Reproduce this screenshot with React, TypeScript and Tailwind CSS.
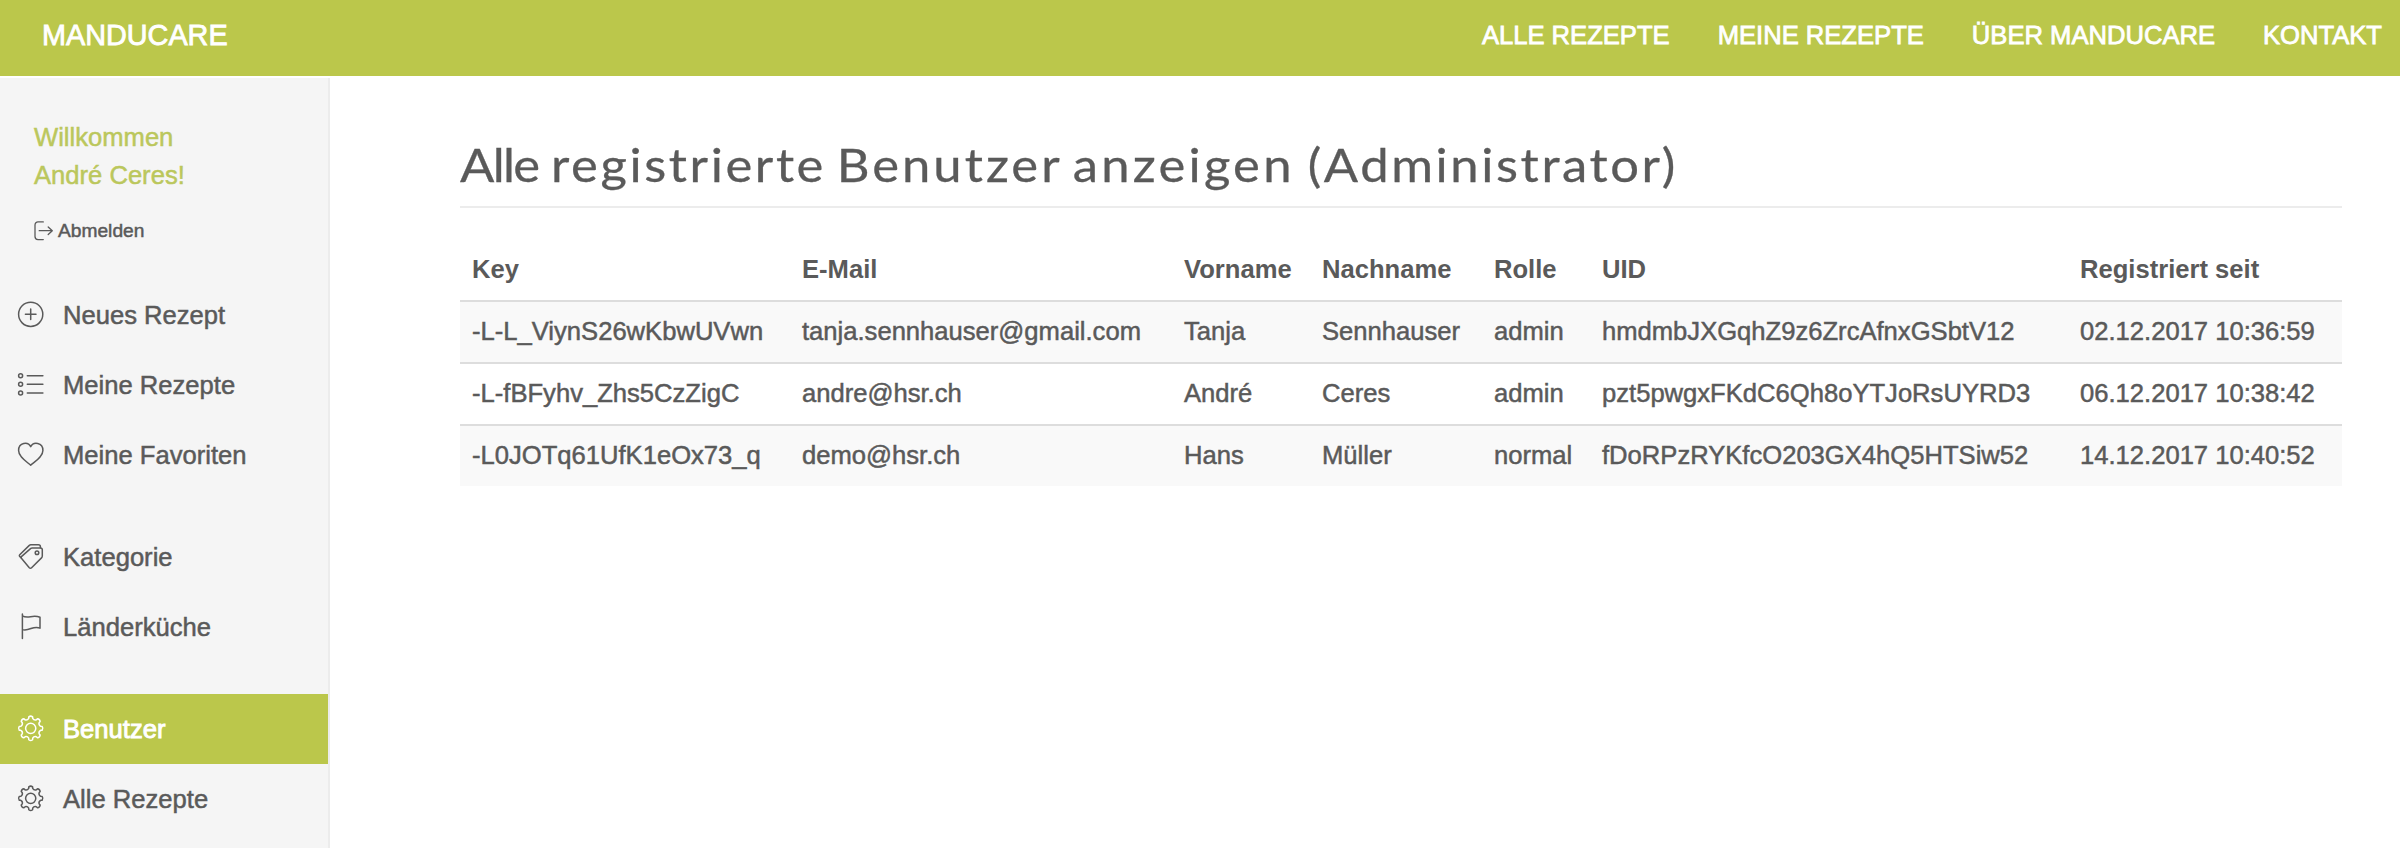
import type { ReactNode } from "react";

const navLinks = ["ALLE REZEPTE", "MEINE REZEPTE", "ÜBER MANDUCARE", "KONTAKT"];

const headers = ["Key", "E-Mail", "Vorname", "Nachname", "Rolle", "UID", "Registriert seit"];

const users = [
  ["-L-L_ViynS26wKbwUVwn", "tanja.sennhauser@gmail.com", "Tanja", "Sennhauser", "admin", "hmdmbJXGqhZ9z6ZrcAfnxGSbtV12", "02.12.2017 10:36:59"],
  ["-L-fBFyhv_Zhs5CzZigC", "andre@hsr.ch", "André", "Ceres", "admin", "pzt5pwgxFKdC6Qh8oYTJoRsUYRD3", "06.12.2017 10:38:42"],
  ["-L0JOTq61UfK1eOx73_q", "demo@hsr.ch", "Hans", "Müller", "normal", "fDoRPzRYKfcO203GX4hQ5HTSiw52", "14.12.2017 10:40:52"],
];

function Icon({ children }: { children: ReactNode }) {
  return (
    <svg
      className="h-[26px] w-[26px] shrink-0 overflow-visible"
      viewBox="0 0 26 26"
      fill="none"
      stroke="currentColor"
      strokeWidth="1.5"
      strokeLinecap="round"
      strokeLinejoin="round"
    >
      {children}
    </svg>
  );
}

function PlusIcon() {
  return (
    <Icon>
      <circle cx="12.7" cy="12.3" r="12.1" />
      <path d="M12.7 7v10.6M7.4 12.3H18" />
    </Icon>
  );
}

function ListIcon() {
  return (
    <Icon>
      <circle cx="2.6" cy="3.7" r="2" />
      <circle cx="2.6" cy="12.3" r="2" />
      <circle cx="2.6" cy="20.9" r="2" />
      <path d="M9.3 3.7h15.6M9.3 12.3h15.6M9.3 20.9h15.6" />
    </Icon>
  );
}

function HeartIcon() {
  return (
    <Icon>
      <path d="M12.7 4.6C10.2 -.6 .6 .1 .6 8.4C.6 14.8 8 19.2 12.7 23.2C17.4 19.2 24.9 14.8 24.9 8.4C24.9 .1 15.2 -.6 12.7 4.6Z" />
    </Icon>
  );
}

function TagIcon() {
  return (
    <Icon>
      <path d="M3.4 14.2a1.2 1.2 0 0 1 0-1.6L12.8 4.4a2 2 0 0 1 1.3-.5H22.5a1.8 1.8 0 0 1 1.8 1.8V12a2.6 2.6 0 0 1-.8 1.9L13.6 23.8a1.6 1.6 0 0 1-2.3 0Z" />
      <path d="M3.3 14L1.7 12.4a1.2 1.2 0 0 1 0-1.7L11.3 1.4a2 2 0 0 1 1.4-.6H20.4a2 2 0 0 1 2 2v1" />
      <circle cx="19" cy="8.7" r="1.8" />
    </Icon>
  );
}

function FlagIcon() {
  return (
    <Icon>
      <path d="M4.4 0V24.6M4.4 1.8C10 5.2 14.5 .2 22 3.2V14.2C15.5 10.8 11.5 17.6 4.4 15.6" />
    </Icon>
  );
}

function gearPoint(radius: number, degrees: number) {
  const angle = (degrees * Math.PI) / 180;
  return `${(12.7 + radius * Math.cos(angle)).toFixed(2)} ${(12.3 + radius * Math.sin(angle)).toFixed(2)}`;
}

const gearPath =
  [0, 45, 90, 135, 180, 225, 270, 315]
    .map(
      (a, i) =>
        `${i === 0 ? "M" : "L"}${gearPoint(11.6, a - 9.5)}Q${gearPoint(12.9, a)} ${gearPoint(11.6, a + 9.5)}L${gearPoint(10.1, a + 11.5)}Q${gearPoint(8.4, a + 22.5)} ${gearPoint(10.1, a + 33.5)}`,
    )
    .join("") + "Z";

function GearIcon() {
  return (
    <Icon>
      <path d={gearPath} />
      <circle cx="12.7" cy="12.3" r="5.1" />
    </Icon>
  );
}

function LogoutIcon() {
  return (
    <svg
      className="h-5 w-5 shrink-0"
      viewBox="0 0 20 20"
      fill="none"
      stroke="currentColor"
      strokeWidth="1.3"
      strokeLinecap="round"
      strokeLinejoin="round"
    >
      <path d="M9.3 .9H4A3 3 0 0 0 1 3.9V15.6A3 3 0 0 0 4 18.6H9.3M5.2 9.7H18.3M14.2 5.9L18.3 9.7L14.2 13.5" />
    </svg>
  );
}

function SideItem({ icon, label, active = false }: { icon: ReactNode; label: string; active?: boolean }) {
  return (
    <a
      className={
        active
          ? "flex h-[70px] items-center gap-[19px] bg-[#bbc74b] pl-[18px] text-white [-webkit-text-stroke:0.9px]"
          : "flex h-[70px] items-center gap-[19px] pl-[18px]"
      }
    >
      {icon}
      <span>{label}</span>
    </a>
  );
}

export default function App() {
  return (
    <div className="flex h-[848px] w-[2400px] flex-col overflow-hidden bg-white font-['Liberation_Sans',Arial,sans-serif] text-[25.6px] text-[#5a5a5a] [-webkit-text-stroke:0.5px]">
      <header className="mb-0.5 flex h-[76px] shrink-0 items-center justify-between bg-[#bbc74b] pr-[18px] pl-[42px] text-white [-webkit-text-stroke:0.8px]">
        <span className="pb-1 text-[28.8px]">MANDUCARE</span>
        <nav className="flex gap-12 pb-1.5">
          {navLinks.map((link) => (
            <a key={link}>{link}</a>
          ))}
        </nav>
      </header>

      <div className="flex min-h-0 flex-1">
        <aside className="w-[330px] shrink-0 border-r-2 border-[#ececec] bg-[#f5f5f5]">
          <div className="h-[202px] pt-10 pl-[34px]">
            <p className="leading-[38px] text-[#bbc75c]">
              Willkommen
              <br />
              André Ceres!
            </p>
            <a className="mt-[23px] flex items-center gap-1 text-[19.2px] leading-7">
              <LogoutIcon />
              Abmelden
            </a>
          </div>
          <nav className="flex flex-col gap-8">
            <div>
              <SideItem icon={<PlusIcon />} label="Neues Rezept" />
              <SideItem icon={<ListIcon />} label="Meine Rezepte" />
              <SideItem icon={<HeartIcon />} label="Meine Favoriten" />
            </div>
            <div>
              <SideItem icon={<TagIcon />} label="Kategorie" />
              <SideItem icon={<FlagIcon />} label="Länderküche" />
            </div>
            <div>
              <SideItem icon={<GearIcon />} label="Benutzer" active />
              <SideItem icon={<GearIcon />} label="Alle Rezepte" />
            </div>
          </nav>
        </aside>

        <main className="w-[2012px] pt-[56px] pl-[130px]">
          <h1 className="h-[74px] border-b-2 border-[#ececec] font-['Lato',sans-serif] text-[47px] leading-[60px] whitespace-nowrap [-webkit-text-stroke:0.3px]">
            <span className="inline-flex origin-left scale-x-[1.08]">
              <span className="w-[84.3px] shrink-0 tracking-[-1.5px]">Alle </span>
              <span className="w-[264.5px] shrink-0 tracking-[2.4px]">registrierte </span>
              <span className="w-[218.5px] shrink-0 tracking-[2.8px]">Benutzer </span>
              <span className="w-[217.6px] shrink-0 tracking-[3px]">anzeigen </span>
              <span className="shrink-0 tracking-[2.4px]">(Administrator)</span>
            </span>
          </h1>
          <table className="mt-[30px] w-[1882px] table-fixed border-collapse text-left">
            <colgroup>
              <col className="w-[330px]" />
              <col className="w-[382px]" />
              <col className="w-[138px]" />
              <col className="w-[172px]" />
              <col className="w-[108px]" />
              <col className="w-[478px]" />
              <col className="w-[274px]" />
            </colgroup>
            <thead>
              <tr className="h-[63px]">
                {headers.map((header) => (
                  <th key={header} className="px-3 py-0 font-bold [-webkit-text-stroke:0px]">
                    {header}
                  </th>
                ))}
              </tr>
            </thead>
            <tbody>
              {users.map((user) => (
                <tr key={user[0]} className="h-[62px] border-t-2 border-[#ddd] last:h-[61px] odd:bg-[#f9f9f9]">
                  {user.map((value, i) => (
                    <td key={i} className="px-3 pt-0 pb-0.5 whitespace-nowrap">
                      {value}
                    </td>
                  ))}
                </tr>
              ))}
            </tbody>
          </table>
        </main>
      </div>
    </div>
  );
}
